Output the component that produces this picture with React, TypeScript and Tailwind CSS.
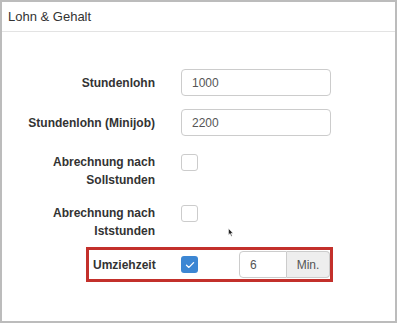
import React from "react";

const font = { fontFamily: '"Liberation Sans", Arial, sans-serif' };

function TextRow({ label, value, first }: { label: string; value: string; first?: boolean }) {
  return (
    <div className={`flex items-center ${first ? "mt-[37px]" : "mt-[13px]"}`}>
      <label className="w-[153px] text-right text-[12px] font-bold text-[#333]">{label}</label>
      <input
        readOnly
        value={value}
        className="ml-[26px] h-[27px] w-[150px] rounded-[4px] border border-[#ccc] bg-white px-[10px] text-[12px] text-[#555] outline-none"
      />
    </div>
  );
}

function CheckRow({ lines, mt }: { lines: string[]; mt: string }) {
  return (
    <div className={`flex items-start ${mt}`}>
      <label className="w-[153px] text-right text-[12px] font-bold leading-[18px] text-[#333]">
        {lines.map((l) => (
          <div key={l}>{l}</div>
        ))}
      </label>
      <span className="ml-[26px] mt-px block h-[17px] w-[17px] rounded-[3px] border border-[#ccc] bg-white" />
    </div>
  );
}

export default function App() {
  return (
    <div style={font} className="relative h-[323px] w-[397px] overflow-hidden border-2 border-[#bcbcbc] bg-white">
      {/* Header */}
      <div className="flex h-[30px] items-center border-b border-[#e3e3e3] px-[6px] text-[13px] text-[#333]">
        Lohn &amp; Gehalt
      </div>

      {/* Body */}
      <div className="flex flex-col">
        <TextRow first label="Stundenlohn" value="1000" />
        <TextRow label="Stundenlohn (Minijob)" value="2200" />
        <CheckRow mt="mt-[17px]" lines={["Abrechnung nach", "Sollstunden"]} />
        <CheckRow mt="mt-[15px]" lines={["Abrechnung nach", "Iststunden"]} />

        {/* Highlighted row */}
        <div className="ml-[84px] mt-[7px] flex h-[35px] w-[247px] items-center border-[3px] border-[#c3302b] pl-[4px]">
          <label className="w-[88px] text-[12px] font-bold text-[#333]">Umziehzeit</label>
          <span className="flex h-[17px] w-[17px] items-center justify-center rounded-[3px] bg-[#3c86d3]">
            <svg width="10" height="8" viewBox="0 0 10 8" fill="none">
              <path d="M1.5 4.2 L3.9 6.4 L8.6 1.6" stroke="white" strokeWidth="1.3" strokeLinecap="round" strokeLinejoin="round" />
            </svg>
          </span>
          <div className="ml-[41px] flex h-[27px]">
            <input
              readOnly
              value="6"
              className="h-full w-[48px] rounded-l-[4px] border border-[#ccc] bg-white px-[10px] text-[12px] text-[#555] outline-none"
            />
            <span className="flex h-full w-[43px] items-center justify-center rounded-r-[4px] border border-l-0 border-[#ccc] bg-[#eee] text-[12px] text-[#555]">
              Min.
            </span>
          </div>
        </div>
      </div>

      {/* Mouse pointer */}
      <svg className="absolute left-[226px] top-[226px]" width="6" height="9" viewBox="0 0 6 9">
        <path d="M0.5 0.5 L0.5 7 L2 5.6 L3.2 8.3 L4.2 7.9 L3 5.3 L5 5.2 Z" fill="#222" stroke="white" strokeWidth="0.5" />
      </svg>
    </div>
  );
}
